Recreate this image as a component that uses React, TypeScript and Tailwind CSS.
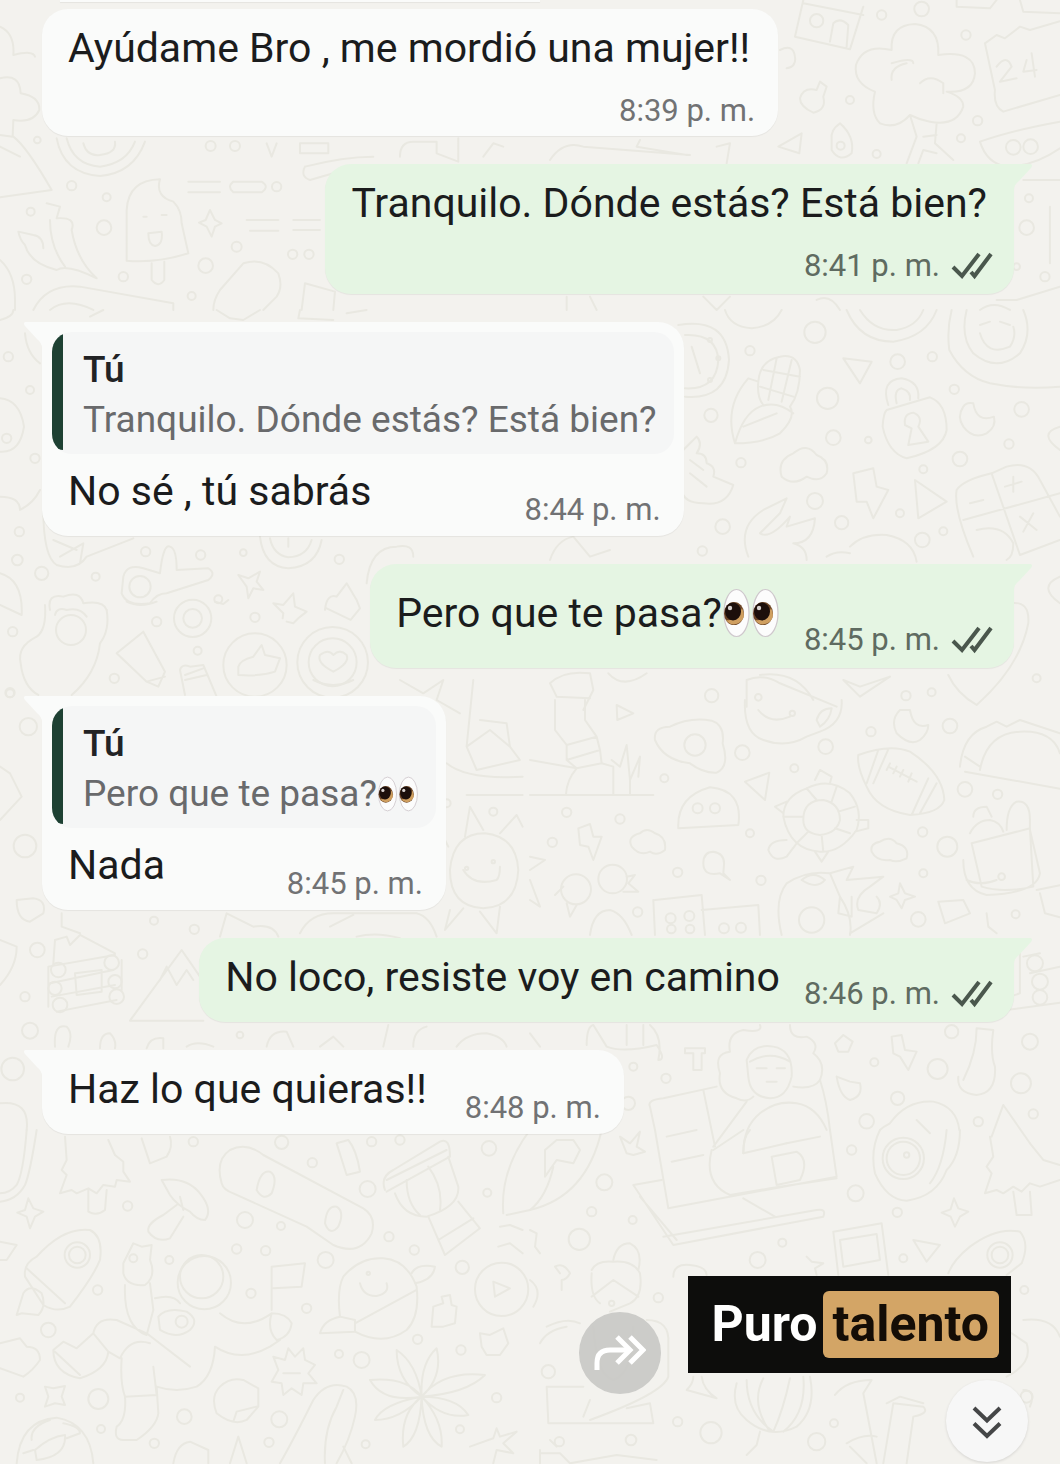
import React from 'react';

interface Tile {
  x: number;
  y: number;
  paths: string[];
  circles: [number, number, number][];
}

// Wallpaper doodles, grouped in tiles. Coordinates inside a tile are three times finer than the page.
const tiles: Tile[] = [
  {
    x: 0,
    y: 0,
    paths: [
      'M0 80Q45 100 40 165Q100 150 105 170M0 235Q60 220 62 280Q120 290 118 330Q100 370 40 360L38 410L0 405M40 410Q80 440 155 570L0 592M0 440L60 470',
      'M170 415Q190 520 300 528Q400 520 435 425M200 415Q220 495 300 500Q380 490 405 425M250 430Q260 470 300 465Q350 460 345 425',
      'M380 630Q385 540 480 538Q465 590 520 605Q545 630 545 670L565 760Q470 790 380 782ZM455 790V840Q475 865 493 840V785M445 700L485 695Q490 735 465 738Q445 735 445 700M430 650H440M485 645H500',
      'M565 545H660M565 577H660M700 545H785Q810 560 785 577H700Q680 560 700 545M740 660H835M750 692H835M880 660H960M880 690H960',
      'M630 630L645 660L665 670L645 680L635 710L620 680L597 668L617 660Z',
      'M140 610L180 620L170 655Q230 650 215 690Q230 780 290 835Q200 790 170 810Q90 790 75 735Q60 720 55 695L100 705Q130 710 130 745M150 660Q150 740 195 800',
      'M0 780Q45 820 45 900V930M100 930Q140 850 240 860L520 910V930M150 930Q200 890 280 930',
      'M660 870L730 790Q790 770 835 820Q850 860 830 890L790 930M660 870Q640 900 640 930M905 930L915 850L1005 875L1000 930M800 430L815 470L830 430',
      'M900 430H985V460H900ZM915 500Q1030 470 1120 470M915 500Q900 530 930 540L1000 520M1200 470Q1200 425 1240 425H1310V460L1375 485V415M1450 470L1480 430L1510 440',
    ],
    circles: [[215, 557, 14], [320, 592, 12], [312, 683, 22], [710, 740, 15], [617, 797, 22], [370, 830, 14], [80, 838, 14], [575, 888, 12], [632, 438, 15], [705, 438, 15], [830, 560, 14], [92, 635, 12], [112, 420, 10], [878, 763, 14], [927, 763, 14]],
  },
  {
    x: 530,
    y: 0,
    paths: [
      'M820 0L795 110L960 148L1000 20M900 125L910 70Q930 50 955 75L950 140M820 10L1000 45',
      'M1085 150Q1080 75 1155 72Q1230 80 1225 165Q1335 150 1335 220Q1330 280 1250 275Q1300 290 1300 320Q1280 380 1200 365Q1170 360 1140 345Q1100 390 1050 370Q1020 340 1035 275Q970 250 978 195Q1000 130 1085 150M1085 190Q1150 170 1150 190M1085 240Q1080 200 1130 190M1170 250Q1200 220 1240 250V280M1140 345L1160 410L1130 490M1220 370L1215 430L1270 480M1180 410L1220 405M1165 490L1180 450L1220 460',
      'M810 295Q820 260 860 270L870 245L890 260L880 290Q890 330 850 338Q810 320 810 295M745 440L815 400L808 460ZM905 420Q900 390 930 370Q975 410 965 460Q930 490 905 450Z',
      'M1365 130L1400 105L1425 115L1470 80L1500 90L1590 64M1365 130L1395 270Q1390 320 1420 335L1590 285M1400 200Q1430 160 1445 200L1410 245L1460 235M1490 180L1480 215L1520 210M1505 160L1515 230M1350 425Q1450 390 1590 365M1350 425Q1370 490 1430 500Q1510 500 1590 445',
      'M750 150Q790 130 795 170Q800 200 770 205M1280 0V20L1380 25L1400 0M1470 0L1480 35L1590 40M1480 540H1590M1560 620V790M1400 900H1460L1590 860M1350 930Q1390 900 1440 930M60 480Q100 420 160 440L480 465M330 420L320 440L470 465M560 440L600 430L590 490',
      'M110 890V930M180 890L200 930M520 890L560 930L600 890M860 900Q900 880 930 930',
    ],
    circles: [[1055, 45, 14], [1175, 27, 22], [1308, 105, 14], [860, 62, 20], [960, 300, 12], [1343, 362, 14], [1293, 415, 12], [1040, 462, 12], [1450, 442, 22], [1502, 440, 22], [1490, 683, 22], [1497, 595, 12], [932, 437, 12], [1460, 800, 10], [1545, 830, 14]],
  },
  {
    x: 0,
    y: 310,
    paths: [
      'M75 70Q80 130 120 160M0 265Q60 270 72 350Q60 430 0 425M0 560Q60 560 60 600Q100 580 120 540M130 600Q130 740 170 765Q230 785 260 740L400 685M160 690L230 720M180 740L250 700L240 760',
      'M780 680Q790 770 865 775Q950 770 965 690M810 685Q820 735 865 742Q920 740 935 690M865 685V710',
      'M370 800Q380 760 430 775L480 790Q490 700 510 710Q530 715 530 780L625 775Q650 790 625 810L500 850Q470 850 450 880Q380 890 365 850Z',
      'M715 795L745 805L780 785L770 815L790 840L760 835L745 865L740 830Z',
      'M820 880L850 885L880 850L885 890L920 905L895 925L880 940L860 935M820 880L850 910L848 925M975 900Q980 850 1010 860L1040 820L1070 870L1080 895L1052 930L980 895M1100 820Q1110 710 1190 710Q1240 700 1240 740',
      'M150 900Q140 850 190 860Q240 840 250 880Q310 870 320 900M0 790Q70 810 65 915L0 885M0 30Q40 20 40 0M310 0L270 20M650 0L690 25L730 30L780 0M900 0L895 25L1000 30M1040 10L1100 0',
    ],
    circles: [[25, 140, 14], [90, 240, 12], [105, 445, 14], [58, 665, 14], [52, 750, 16], [125, 790, 20], [437, 725, 14], [602, 735, 14], [287, 800, 12], [655, 868, 12], [1018, 748, 14], [420, 830, 32], [20, 385, 14], [730, 728, 10]],
  },
  {
    x: 0,
    y: 600,
    paths: [
      'M135 15Q140 90 110 110Q50 140 62 190Q70 260 115 285M320 30Q330 90 300 130Q290 220 215 285M165 45Q170 20 200 30Q240 20 260 50',
      'M430 95L350 160L440 245L475 260L495 215ZM440 245L495 230M540 210Q545 190 570 200L610 195L650 290M540 210L555 285M555 225L610 205M555 240L620 225',
      'M715 200Q720 180 760 170L785 135L795 165L840 175L825 215Q780 230 715 225ZM380 5Q420 25 470 5M645 5L670 12L685 0',
      'M960 165Q985 145 1000 165Q1020 145 1040 165Q1050 190 1000 215Q950 190 960 165M940 240Q1000 270 1060 240',
    ],
    circles: [[213, 90, 45], [38, 95, 14], [30, 278, 14], [470, 65, 14], [343, 235, 14], [593, 152, 12], [765, 52, 14], [578, 55, 56], [578, 55, 28], [765, 195, 95], [998, 187, 106], [998, 187, 72]],
  },
  {
    x: 530,
    y: 310,
    paths: [
      'M445 45Q590 20 597 150Q590 270 465 260M465 75Q560 70 565 150Q560 240 465 235M485 110L510 190',
      'M585 0Q600 50 665 55Q730 50 755 0M950 0Q990 95 1090 95Q1190 80 1220 0M990 0Q1030 65 1100 60Q1160 50 1180 0M1265 0Q1250 60 1258 120Q1300 200 1380 220Q1480 240 1590 230M1310 0Q1290 80 1330 130Q1400 190 1470 130Q1510 70 1480 0M1350 70Q1370 140 1440 110Q1460 80 1450 50M1350 45L1380 35M1410 35L1440 45',
      'M615 400Q580 290 655 205L685 215Q690 150 750 140Q800 130 810 180Q810 250 780 290Q800 320 750 370Q700 400 615 400M615 400Q640 310 690 290Q740 270 790 310M685 215Q680 260 700 285M700 180L810 200M690 230L790 260M740 145L715 270M785 150L755 275M640 350L740 310',
      'M1075 285Q1050 210 1115 205Q1170 215 1165 265M1100 280Q1090 240 1115 235Q1145 245 1140 270M1070 300L1200 262Q1250 280 1250 360Q1240 420 1130 445Q1075 430 1058 350Q1060 310 1070 300M1125 345Q1120 310 1150 308Q1180 320 1165 350L1195 395L1135 405L1145 355Z',
      'M940 145L1025 155L990 220ZM1300 290Q1280 320 1300 350Q1330 390 1370 370Q1400 350 1392 320Q1340 340 1330 280Q1310 275 1300 290',
      'M755 500Q740 450 790 430Q830 395 860 435Q900 450 890 490Q870 520 830 500Q790 530 755 500M970 490L1030 475L1040 530L1075 540L1030 625L1010 575H980ZM1155 510L1250 575L1165 625Z',
      'M1280 540Q1300 510 1385 490L1430 470Q1500 450 1530 510L1590 620M1280 540Q1270 600 1330 740M1385 490L1470 735M1300 630L1590 550M1340 660Q1420 640 1450 700Q1450 740 1430 750M1450 500V545M1425 530L1475 515M1470 735L1590 690M1320 580L1360 570M1470 620L1520 660M1510 610L1480 665',
      'M460 420L500 380Q520 400 500 430Q530 430 530 460Q560 470 550 500L610 525Q590 590 520 580Q460 580 455 540M480 450L520 480M480 490L530 530',
      'M655 740Q620 650 700 600L770 565L750 610L690 670Q720 690 780 620L770 650L855 625Q850 700 790 700Q830 710 830 750M890 740Q920 720 960 730M960 710Q1000 670 1070 675Q1150 690 1160 755M60 750Q80 690 130 680L180 740L240 720',
      'M1590 800Q1520 830 1590 880M1440 880Q1500 870 1495 940Q1470 1070 1340 1185Q1280 1150 1255 1095M650 1190V1110Q700 1090 750 1120L920 1190M690 1095Q800 1080 850 1170M80 1160L60 1120Q100 1080 180 1090L190 1140L160 1200M80 1160L180 1165M235 1090Q280 1140 350 1090M940 1110L990 1160L1080 1100L990 1130Z',
      'M1590 350Q1520 370 1590 420',
    ],
    circles: [[855, 67, 32], [660, 122, 14], [1103, 155, 22], [1207, 140, 14], [893, 265, 32], [543, 316, 20], [910, 383, 22], [1273, 238, 14], [1475, 298, 22], [1437, 402, 14], [1290, 447, 22], [633, 458, 14], [1180, 478, 12], [855, 573, 24], [578, 650, 22], [935, 638, 20], [1177, 690, 22], [1240, 664, 12], [517, 723, 14], [1110, 610, 12], [1520, 1105, 12], [1128, 1157, 14], [545, 1157, 20], [1205, 1147, 12], [685, 1162, 10], [540, 90, 6], [565, 145, 6], [540, 210, 6], [1015, 390, 10]],
  },
  {
    x: 0,
    y: 680,
    paths: [
      'M1200 0L1270 40L1330 0L1310 60L1380 100',
      'M1420 0L1400 200L1430 270L1560 240L1530 200L1520 130L1440 120M1400 200L1470 150L1530 200M1340 250Q1400 300 1568 290M1400 345H1568',
      'M1350 570Q1360 460 1455 460Q1550 470 1555 570Q1550 680 1450 685Q1350 680 1350 570M1395 470L1410 380L1450 450M1500 460L1550 405L1568 440M1345 500L1330 470M1350 690L1335 750L1390 685M1440 695L1490 760L1500 680M1390 570Q1420 620 1490 600Q1500 590 1500 560',
      'M30 280L65 350L0 420M0 260L30 280M50 660L100 655Q140 660 130 700L90 725Q50 720 50 660M0 780L50 800Q50 860 0 915',
      'M160 850L165 780L200 770L210 795L240 765L345 820M145 860L345 825M150 910L340 870M155 950L345 915M170 995L350 960M145 860V980M365 840V930M225 880L305 870V935L230 945Z',
      'M390 1022L545 810L600 890M390 1022H610M480 900L500 860L530 915L560 870L580 900',
      'M900 760Q930 700 1000 700H1250Q1290 710 1310 770M990 740L1060 705M1070 770Q1130 755 1200 775M660 770L680 700L760 740Q820 730 835 770M185 700V740L240 760',
      'M165 1100Q160 1030 200 1040Q220 1060 205 1100M300 1105Q300 1060 330 1060Q350 1080 345 1105M440 1105Q450 1070 490 1075V1105M800 1100Q810 1050 860 1055L880 1100M960 1100L1000 1070L1030 1100M560 1100Q590 1080 640 1100M1150 1100L1165 1035M1240 1100Q1240 1050 1280 1040M1370 1100Q1400 1060 1460 1060Q1510 1070 1520 1100',
      'M0 1270Q90 1260 80 1350',
    ],
    circles: [[85, 140, 26], [75, 498, 34], [30, 40, 12], [112, 810, 22], [428, 822, 14], [75, 950, 14], [90, 1052, 24], [38, 1167, 34], [583, 748, 14], [462, 722, 12], [175, 870, 22], [335, 848, 22], [165, 925, 20], [345, 905, 20], [180, 975, 22], [350, 950, 22], [1400, 565, 5], [1480, 545, 5], [1480, 395, 12], [720, 1065, 10], [1340, 370, 12]],
  },
  {
    x: 530,
    y: 700,
    paths: [
      'M75 0V90L110 135L200 110L165 60V0M110 135L110 180L210 150L200 110M110 180L140 205L215 190L210 150M0 180L140 205Q110 240 108 283M215 190L250 200V283M0 285H370M245 180L270 200L290 135L300 240M300 283V240L330 170L325 230M260 15L310 40L262 60Z',
      'M375 120Q370 80 420 80Q480 50 545 62Q585 75 578 130Q600 200 560 218Q520 220 480 190Q400 180 375 120M645 0Q640 100 700 120Q770 145 830 110L870 95Q940 70 935 0M685 30Q720 75 780 50M860 60Q870 25 905 25Q900 60 870 80ZM1110 30Q1080 60 1100 100Q1140 140 1170 120Q1195 100 1195 75Q1150 90 1140 30ZM1290 200Q1300 100 1370 80L1400 65L1430 80L1470 60L1590 100M1305 215L1590 266M1350 210Q1370 100 1470 95Q1568 90 1590 160M1305 170L1350 200',
      'M645 245L718 218L705 300ZM445 385Q440 290 540 262Q640 270 625 375ZM985 165Q1080 130 1140 155Q1240 220 1243 300Q1230 340 1140 345Q1040 330 1010 260Q980 200 985 165M1045 150L1010 250M1075 148L1030 250M1195 235L1145 345M1220 250L1170 340M1075 200L1160 245M1080 190L1070 210M1100 200L1090 220M1120 210L1110 230M1145 220L1135 245',
      'M820 360Q820 300 880 300Q930 310 930 360Q920 400 870 405Q820 400 820 360M760 350Q760 290 830 265Q900 230 960 280Q1000 330 980 390Q930 460 870 455Q780 450 760 350M830 265L860 300M920 260L905 305M975 320L925 335M960 400L915 385M880 455L875 405M800 430L835 395M760 350H820M855 240L870 210L905 230L900 250M760 340L735 320L770 305M980 360H1015V385L975 395M770 420Q720 420 715 450Q730 490 770 470L800 430M855 455L875 485L895 455',
      'M145 385L180 372L190 410L215 410L190 480L175 440L150 435ZM305 440Q290 410 330 400Q350 380 375 400Q410 410 405 450Q380 470 360 455Q330 470 305 440M1025 455Q1020 430 1050 425Q1080 405 1100 430Q1140 440 1130 475Q1100 490 1080 480Q1040 485 1025 455M520 490Q520 455 550 455Q585 460 582 495L580 520L600 540L570 520Q520 530 520 490',
      'M75 585L100 560M110 610L120 650L140 615M290 530L315 525L295 550L325 575L280 575M375 600L515 585L525 705M370 600L375 705M515 630L685 615L690 705M180 705Q190 630 240 630Q280 640 305 705M755 705Q730 600 770 550Q830 510 900 520L970 500L950 540L1060 530L1020 560Q970 590 985 630L1040 640Q1060 610 1040 590M900 520L930 590Q970 650 960 705M930 590L925 640L965 650V590M815 540Q850 510 885 540Q860 570 815 540M960 700L1060 640',
      'M1320 400Q1340 360 1380 360Q1410 365 1420 395M1325 430L1500 385L1510 560Q1420 580 1355 560L1325 430M1430 390Q1430 320 1460 305Q1500 300 1500 360V390L1530 520Q1520 580 1370 585Q1300 570 1300 480M1310 540Q1350 560 1400 540M1330 350Q1330 320 1370 320L1385 350M1225 605L1300 600L1320 640L1245 670ZM1080 590L1105 580L1110 550L1125 580L1155 590L1125 600L1115 625L1100 600ZM1520 570L1590 556M1530 580L1545 640L1590 652M1370 640L1375 680L1400 700M0 540L30 620L0 600M0 470L45 480L0 510',
      'M1440 760L1470 755V880L1440 890M1480 770L1530 760M1430 930L1590 908M1500 820L1590 800M0 1000L30 1040M170 1035Q170 980 190 975L230 1040Q280 1060 380 1035Q410 1080 385 1080Q400 1010 360 975M290 975V1035M340 975V1035',
      'M465 1045H525V1060H515V1110H490V1060H465ZM570 1120Q550 1060 600 1055Q590 1000 640 990Q700 1000 690 975M780 975Q780 1020 830 1010Q870 1030 850 1060Q890 1090 870 1140Q850 1170 790 1160M570 1120Q560 1180 620 1195Q650 1210 670 1190M650 1080Q670 1030 730 1040Q790 1050 785 1130Q770 1195 720 1195Q660 1190 655 1130ZM660 1085Q720 1050 780 1085M680 1105H710M740 1105H765M710 1145H740',
      'M360 1220Q350 1200 400 1195L560 1160M360 1220L375 1290M520 1170L555 1340M650 1205L550 1340M640 1360Q640 1280 690 1240Q740 1200 800 1210Q860 1220 890 1290M870 1140Q890 1200 900 1290M770 1330L870 1310M410 1310L500 1290',
      'M1300 1140Q1340 1060 1340 985L1390 990Q1380 1060 1395 1100Q1400 1180 1340 1185Q1280 1180 1285 1130M1085 1010L1115 1005L1125 1050L1160 1055L1135 1110L1110 1070L1090 1060ZM915 1030L940 1005L968 1025L955 1055L925 1055ZM920 1130L960 1145L990 1150Q1000 1190 960 1200Q930 1190 920 1130M1050 1290Q1060 1280 1080 1270Q1130 1200 1210 1205Q1280 1220 1288 1290M1160 1260L1200 1300M1420 1215L1500 1330M1420 1215L1385 1310',
    ],
    circles: [[637, 158, 22], [887, 140, 22], [1023, 95, 14], [1260, 78, 22], [1305, 268, 22], [1403, 283, 14], [403, 235, 12], [793, 205, 12], [270, 357, 14], [110, 337, 14], [67, 427, 14], [1252, 440, 30], [1178, 396, 14], [660, 400, 12], [443, 517, 14], [693, 541, 14], [138, 568, 45], [248, 537, 43], [323, 636, 14], [495, 135, 32], [503, 325, 15], [555, 325, 15], [1165, 658, 22], [1180, 520, 12], [422, 655, 15], [478, 648, 15], [424, 687, 13], [480, 687, 13], [582, 685, 15], [633, 683, 15], [845, 660, 38], [1457, 643, 12], [1515, 790, 24], [1530, 845, 24], [1530, 892, 22], [1265, 995, 20], [1500, 1025, 24], [1223, 1107, 30], [1103, 1195, 20], [1473, 1150, 30], [1033, 1087, 12], [1010, 1264, 22], [1345, 1265, 14], [1510, 1242, 14], [408, 1135, 14], [310, 1100, 12], [295, 1210, 20], [787, 40, 8], [1415, 530, 10]],
  },
  {
    x: 0,
    y: 1130,
    paths: [
      'M80 0Q70 130 50 165Q30 190 0 190M110 0Q90 130 75 165Q50 210 0 215M195 20L200 90L185 120L200 135L180 190L215 180L230 190L265 175L290 190L310 165L345 170L350 150L390 155L370 125V95L345 75L325 30M265 180V245Q290 260 315 240L320 180',
      'M485 150Q560 140 600 190Q640 240 615 270Q590 270 570 245Q530 225 510 195ZM530 225L490 255Q440 280 445 305Q470 340 510 325L550 260M540 200L550 240M425 25L450 100L500 80Q520 50 510 20',
      'M665 160Q645 90 690 60Q740 35 790 75L1090 235Q1130 260 1115 310Q1080 380 1000 345L920 290L700 190Q670 180 665 160M770 180Q780 120 810 125Q835 140 815 190Q790 215 770 180M975 280Q980 225 1010 230Q1035 245 1015 290Q990 320 975 280M1010 40L1045 30Q1070 60 1080 125L1040 135Z',
      'M1155 180Q1140 140 1180 120L1320 35Q1350 20 1350 80L1160 185M1160 150L1340 60M1185 190Q1210 260 1280 260Q1380 230 1375 170L1345 80M1220 150Q1220 220 1260 255M1285 110Q1330 170 1320 240M1285 260L1335 375L1440 295L1375 215M1315 330L1420 265M1510 250Q1500 120 1590 0M1520 255L1590 240M1500 290L1530 285L1568 300M1495 350L1530 340L1568 370',
      'M75 440Q70 400 110 380Q190 290 270 300Q310 320 300 390Q280 440 210 530Q170 550 130 525ZM80 415L195 520M65 550L50 555L70 490Q90 460 125 490Q140 530 115 555ZM85 205L100 235L130 245L105 260L90 295L80 260L52 248L75 240ZM0 335L50 345L20 390L0 390',
      'M370 400L400 340L425 350L455 345L450 390Q470 440 435 465Q380 470 370 430ZM375 465Q370 590 440 615L460 540L450 460M465 505Q520 490 540 520M475 560Q500 530 560 545Q600 570 570 600Q530 630 480 600ZM280 610Q290 560 350 570L440 610L570 710M280 610L230 655L190 635L160 660Q160 730 240 745Q320 720 325 665L280 610M165 665L240 735M325 665L360 685Q390 620 450 640M365 685Q360 760 375 800L470 795L460 710M375 800Q380 870 350 890Q340 930 370 930H410Q470 890 475 850L470 770Q530 790 590 770Q640 740 645 650Q720 700 810 650L840 630M660 550Q730 610 815 550M815 550Q800 600 830 630Q870 620 875 580Q860 550 815 550M815 540V410L915 400L905 470L820 475',
      'M1020 560Q1010 480 1030 440Q1080 380 1150 385Q1220 390 1250 470Q1260 560 1220 600Q1150 650 1065 605L960 610Q970 570 1020 560L1065 570V605M1065 580L1250 480M1235 430Q1250 400 1305 410Q1300 450 1245 460M1080 460Q1090 500 1130 498Q1170 490 1160 460M1480 455L1530 475L1485 500Z',
      'M0 640L60 625L80 650Q120 650 120 690Q100 720 70 740L0 715M135 770L160 775L195 768L185 800L195 825L165 820L135 830L145 800ZM650 850Q630 800 660 770Q690 740 730 750L775 775V830L740 870Q700 890 650 850M700 875L710 845L770 830M820 680L855 690L865 655L885 680L910 655L915 690L945 705L925 730L950 760L910 760L905 795L875 775L850 795L845 760L815 755L835 720ZM850 730H900',
      'M840 1000Q880 930 940 810Q980 750 1040 770Q1080 790 1065 860Q1050 930 1010 1000M975 1000Q970 900 1010 830L1030 780M1030 950L1055 1000M520 1000Q530 940 570 935L625 960V1000M690 1000L715 920L740 1000M1295 590L1300 530L1330 520L1325 500L1350 495L1355 525L1370 530L1365 580L1330 590ZM1440 610L1470 615L1510 595L1525 640L1500 675L1460 675L1445 650Z',
      'M1265 800Q1190 750 1190 660Q1250 700 1265 800Q1260 700 1310 655Q1330 740 1265 800Q1330 720 1455 735Q1400 790 1265 800Q1370 800 1405 855Q1330 870 1265 800Q1330 870 1325 950Q1270 920 1265 800Q1260 920 1210 950Q1200 850 1265 800Q1200 870 1125 870Q1150 820 1265 800Q1150 820 1110 750Q1220 740 1265 800M1410 950L1480 925L1490 895L1500 920L1550 905L1510 940L1540 970L1490 960L1480 1000',
      'M50 1000Q60 870 170 863Q270 880 280 1000M95 930Q90 890 150 870M105 960Q150 920 195 915Q200 980 110 990ZM190 880Q240 890 240 910L200 925M70 970L100 960',
    ],
    circles: [[232, 375, 38], [232, 375, 25], [613, 458, 80], [605, 440, 65], [735, 270, 24], [845, 37, 20], [1103, 177, 24], [1467, 55, 22], [937, 98, 14], [580, 35, 14], [383, 228, 14], [843, 288, 12], [1167, 320, 14], [710, 357, 14], [797, 362, 14], [508, 390, 12], [977, 390, 24], [1243, 360, 14], [1387, 412, 20], [293, 480, 14], [753, 490, 14], [920, 535, 14], [145, 600, 22], [1505, 478, 80], [1085, 690, 24], [1253, 628, 14], [1383, 660, 14], [1017, 672, 12], [295, 807, 30], [60, 803, 12], [553, 860, 22], [838, 868, 24], [303, 897, 12], [463, 940, 14], [807, 937, 14], [1097, 943, 12], [1380, 898, 12], [1490, 803, 14], [1115, 35, 14], [1200, 30, 14], [400, 385, 12], [545, 575, 18], [1462, 188, 12], [1105, 430, 5]],
  },
  {
    x: 530,
    y: 1130,
    paths: [
      'M0 240Q170 200 215 0M45 60L80 30H130L150 60L130 100L80 90L45 140ZM0 240Q50 200 70 110M270 20L300 40L330 5L320 50L345 65L310 75L290 70Z',
      'M375 0L415 235L920 140L900 0M310 165L395 150M310 165L430 345L880 260Q890 235 860 240L400 320M545 60Q520 160 600 195L720 175L920 145M640 70L770 40M640 70Q640 20 660 0M550 60L640 0M425 95L520 75M725 80L800 65Q840 90 810 150L740 165ZM640 205L735 260M330 200L440 330',
      'M1050 0Q1020 60 1035 130Q1070 210 1130 212Q1220 200 1250 120Q1290 80 1290 0M1250 0Q1240 110 1200 160M1380 20L1390 80L1370 110L1385 130L1365 190L1400 180L1420 190L1450 170L1475 185L1500 160L1530 170L1590 150M1500 40L1540 90L1590 105M1450 185L1460 255H1505L1500 185M1272 205L1285 235L1315 245L1290 260L1275 290L1262 260L1235 248L1262 238Z',
      'M910 305L1055 280L1075 435M910 305L925 435M930 330L1040 312L1050 390L940 410ZM1150 330L1230 345L1190 395ZM1255 430Q1270 390 1320 350Q1400 290 1470 305Q1500 340 1475 400L1430 435',
      'M0 300L20 310L15 350L30 370M0 450Q40 480 10 530M185 420Q200 390 250 395Q310 390 330 430Q340 500 300 520L240 545M185 430Q180 500 210 520M185 500L250 450L325 500M250 390Q260 340 300 340Q340 360 325 420M75 410Q100 395 120 430Q110 450 95 450V480M75 410L90 430M830 380L845 395L880 400L855 415L860 435M430 440Q430 400 480 405Q530 410 530 435',
      'M50 590Q110 560 150 580M350 570Q420 570 415 640V740Q400 790 180 870M30 640Q50 600 110 590M50 770L55 880H370L360 820L290 835M50 770H160M180 810L160 860M190 590Q200 740 250 750Q310 730 310 590M470 780L560 805Q520 780 515 740M470 780Q490 760 490 740',
      'M620 760Q600 830 650 870Q720 930 800 890Q860 840 840 740M650 750Q650 850 730 905M700 745Q660 820 720 905M780 745Q760 840 730 905M820 740Q830 850 760 905M690 905L680 945L650 975',
      'M915 795Q950 750 1025 750L1000 790L1040 1000M1090 820L1060 1000M1090 820L1180 830Q1200 850 1150 860L1130 1000M1070 820L1110 800L1180 820M950 940Q1000 910 1040 920M960 950L1010 1000M1480 570Q1568 560 1590 620M1430 600L1490 640Q1510 700 1430 740M1480 780Q1520 780 1500 830M30 960V1000M30 970H90L120 1000L260 975L380 990M60 930L80 950',
    ],
    circles: [[223, 157, 24], [185, 245, 14], [308, 270, 12], [148, 328, 32], [683, 390, 24], [757, 338, 12], [977, 190, 24], [965, 60, 14], [1102, 247, 14], [1120, 85, 62], [1120, 85, 50], [1410, 375, 38], [1410, 375, 25], [385, 503, 14], [443, 875, 14], [543, 908, 32], [860, 935, 26], [912, 880, 12], [88, 935, 14], [303, 930, 16], [55, 725, 20], [1120, 385, 12], [1483, 480, 12], [1490, 800, 18], [1130, 75, 8], [245, 520, 8]],
  },
];

const Wallpaper: React.FC = () => (
  <svg
    viewBox="0 0 1060 1464"
    preserveAspectRatio="xMidYMin slice"
    className="absolute inset-0 h-full w-full"
    fill="none"
    stroke="#e9e8e1"
    strokeLinecap="round"
    strokeLinejoin="round"
    aria-hidden="true"
  >
    {tiles.map((tile) => (
      <g key={`${tile.x}-${tile.y}`} transform={`translate(${tile.x} ${tile.y}) scale(0.3333)`} strokeWidth={6}>
        {tile.paths.map((d) => (
          <path key={d} d={d} />
        ))}
        {tile.circles.map(([cx, cy, r]) => (
          <circle key={`${cx}-${cy}-${r}`} cx={cx} cy={cy} r={r} />
        ))}
      </g>
    ))}
  </svg>
);

const Eyes: React.FC<{ className: string }> = ({ className }) => (
  <svg viewBox="0 0 58 50" className={className} role="img" aria-label="👀">
    {[0, 29].map((x) => (
      <g key={x} transform={`translate(${x} 0)`}>
        <ellipse cx="14.5" cy="25" rx="12.5" ry="23.5" fill="#fcfcfc" stroke="#cfc8cd" strokeWidth="1.2" />
        <ellipse cx="12" cy="25.5" rx="10" ry="11.5" fill="#6b4526" />
        <path d="M4 32Q15 34 20 20Q25 30 17 35Q9 39 4 32Z" fill="#cf9f60" />
        <ellipse cx="11" cy="23.5" rx="8" ry="9" fill="#1c0f0b" />
        <circle cx="8" cy="20" r="2.2" fill="#d8d2cf" />
      </g>
    ))}
  </svg>
);

const Ticks: React.FC = () => (
  <svg viewBox="0 0 42 28" className="mb-1 h-7 w-[42px] shrink-0" fill="none" stroke="#4a574d" strokeWidth="4" role="img" aria-label="Entregado">
    <path d="M2 15L11 24L28 2" />
    <path d="M20 20L23.5 24L40 2" />
  </svg>
);

interface BubbleProps {
  out?: boolean;
  tail?: boolean;
  children: React.ReactNode;
}

const Bubble: React.FC<BubbleProps> = ({ out = false, tail = true, children }) => (
  <li
    className={`relative rounded-[26px] shadow-[0_1px_1px_rgba(0,0,0,0.06)] ${out ? 'self-end bg-[#e5f5e3]' : 'self-start bg-[#fafbfa]'} ${
      tail ? (out ? 'rounded-tr-none' : 'rounded-tl-none') : ''
    }`}
  >
    {tail && (
      <svg viewBox="0 0 18 26" className={`absolute top-0 h-[26px] w-[18px] ${out ? '-right-[18px] -scale-x-100' : '-left-[18px]'}`} aria-hidden="true">
        <path d="M18 0H1Q-1 1 1 4L13 17Q18 21 18 26Z" fill={out ? '#e5f5e3' : '#fafbfa'} />
      </svg>
    )}
    {children}
  </li>
);

const Time: React.FC<{ value: string; out?: boolean; className?: string }> = ({ value, out = false, className = '' }) => (
  <span className={`flex items-end justify-end gap-[11px] text-[31px] leading-9 whitespace-nowrap ${out ? 'text-[#5f6b61]' : 'text-[#717274]'} ${className}`}>
    <time>{value}</time>
    {out && <Ticks />}
  </span>
);

const Quote: React.FC<{ author: string; children: React.ReactNode }> = ({ author, children }) => (
  <blockquote className="mx-[10px] mt-[10px] flex h-[122px] overflow-hidden rounded-[20px] bg-[#f5f6f6]">
    <div className="mt-[2px] mb-1 w-[11px] shrink-0 rounded-l-[16px] bg-[#1e4133]" />
    <div className="pt-[13px] pr-[17px] pl-[20px] text-[37px] leading-[50px] whitespace-nowrap text-[#696a6c]">
      <p className="font-medium text-[#222325]">{author}</p>
      <p className="flex items-center">{children}</p>
    </div>
  </blockquote>
);

export default function App() {
  return (
    <main className="relative min-h-screen overflow-hidden bg-[#f3f2ee] font-['Roboto',sans-serif] text-[41px] leading-[48px] text-[#1b1c1d]">
      <Wallpaper />
      <div className="relative pr-[46px] pl-[42px]">
        <div className="mb-[7px] ml-[18px] h-[2px] w-[480px] bg-[#fafbfa] shadow-[0_1px_1px_rgba(0,0,0,0.06)]" />
        <ul className="flex flex-col gap-7 whitespace-nowrap">
          <Bubble tail={false}>
            <div className="pt-[15px] pr-[23px] pb-[7px] pl-[26px]">
              <p className="pr-[5px]">Ayúdame Bro , me mordió una mujer!!</p>
              <Time value="8:39 p. m." className="mt-[21px]" />
            </div>
          </Bubble>
          <Bubble out>
            <div className="pt-[15px] pr-[21px] pb-[10px] pl-[26px]">
              <p className="pr-[6px]">Tranquilo. Dónde estás? Está bien?</p>
              <Time value="8:41 p. m." out className="mt-[21px]" />
            </div>
          </Bubble>
          <Bubble>
            <Quote author="Tú">Tranquilo. Dónde estás? Está bien?</Quote>
            <div className="flex items-end justify-between pt-[13px] pr-[23px] pl-[26px]">
              <p className="pb-[21px]">No sé , tú sabrás</p>
              <Time value="8:44 p. m." className="pb-2" />
            </div>
          </Bubble>
          <Bubble out>
            <div className="flex items-end gap-6 pt-[25px] pr-[21px] pl-[26px]">
              <p className="flex items-center pb-[31px]">
                Pero que te pasa?
                <Eyes className="-my-1 h-[50px] w-[58px]" />
              </p>
              <Time value="8:45 p. m." out className="pb-[10px]" />
            </div>
          </Bubble>
          <Bubble>
            <Quote author="Tú">
              Pero que te pasa?
              <Eyes className="h-9 w-[42px]" />
            </Quote>
            <div className="flex items-end justify-between pt-[13px] pr-[23px] pl-[26px]">
              <p className="pb-[21px]">Nada</p>
              <Time value="8:45 p. m." className="pb-2" />
            </div>
          </Bubble>
          <Bubble out>
            <div className="flex items-end gap-6 pt-[15px] pr-[21px] pl-[26px]">
              <p className="pb-[21px]">No loco, resiste voy en camino</p>
              <Time value="8:46 p. m." out className="pb-[10px]" />
            </div>
          </Bubble>
          <Bubble>
            <div className="flex items-end gap-[38px] pt-[15px] pr-[23px] pl-[26px]">
              <p className="pb-[21px]">Haz lo que quieras!!</p>
              <Time value="8:48 p. m." className="pb-2" />
            </div>
          </Bubble>
        </ul>
        <div className="mt-[142px] mr-[3px] flex items-start justify-end gap-[27px]">
          <button aria-label="Reenviar" className="mt-9 flex h-[82px] w-[82px] items-center justify-center rounded-full bg-[#c9c9c6]/95">
            <svg viewBox="0 0 52 38" className="h-[38px] w-[52px]" fill="none" stroke="#fff" strokeWidth="5" aria-hidden="true">
              <path d="M3 36V29Q3 16 16 16H35" />
              <path d="M23 3L36 16L23 29" />
              <path d="M36 3L49 16L36 29" />
            </svg>
          </button>
          <div className="flex h-[97px] items-center gap-[5px] bg-[#0d0d0c] pr-3 pl-6 text-[50px] leading-[67px] font-bold">
            <span className="text-white">Puro</span>
            <span className="rounded-[6px] bg-[#d3a566] px-[10px] text-[#140d06]">talento</span>
          </div>
        </div>
      </div>
      <button
        aria-label="Ir al final"
        className="absolute right-8 bottom-[2px] flex h-[82px] w-[82px] items-center justify-center rounded-full bg-[#f7f7f7] shadow-[0_1px_3px_rgba(0,0,0,0.12)]"
      >
        <svg viewBox="0 0 30 34" className="mt-1 h-[34px] w-[30px]" fill="none" stroke="#454647" strokeWidth="4" aria-hidden="true">
          <path d="M2 2L15 14.5L28 2" />
          <path d="M2 17.5L15 30L28 17.5" />
        </svg>
      </button>
    </main>
  );
}
